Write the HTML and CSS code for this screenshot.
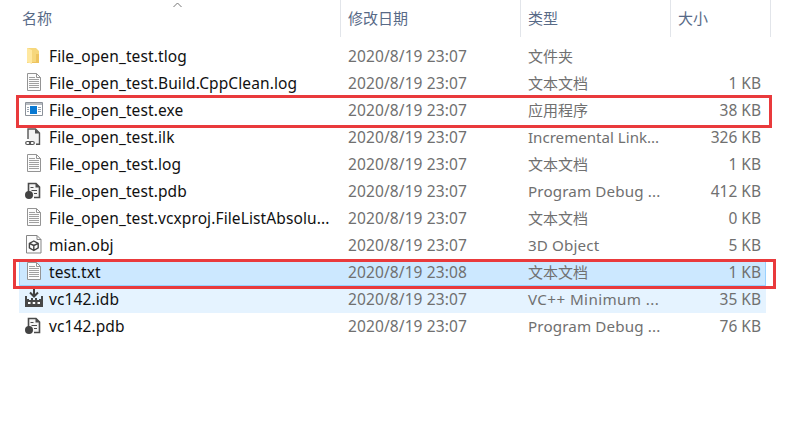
FILE: index.html
```html
<!DOCTYPE html>
<html lang="zh-CN">
<head>
<meta charset="utf-8">
<title>Debug</title>
<link rel="stylesheet" href="styles.css">
</head>
<body>
<svg class="defs" aria-hidden="true">
  <symbol id="folder" viewBox="0 0 20 22"><path d="M3 3h9l3 3v12H3z" fill="#f6d77c"/><path d="M3 3l5 2v14l-5-2z" fill="#ffe8a0"/><path d="M12 9h3v9H8v-1h4z" fill="#eec45f"/></symbol>
  <symbol id="doc" viewBox="0 0 20 22"><path d="M3.500 2.500h9l4 4v13h-13z" fill="#fcfcfc" stroke="#949494"/><path d="M12.500 2.500v4h4" fill="none" stroke="#949494"/><path d="M5 6.500h6M5 8.500h10M5 10.500h10M5 12.500h10M5 14.500h10M5 16.500h10" stroke="#a0a0a0" fill="none"/></symbol>
  <symbol id="exe" viewBox="0 0 20 22"><path d="M1.500 3.500h17v13h-17z" fill="#fff" stroke="#8b9199"/><path d="M2 4h16v2H2z" fill="#b7bcc2"/><path d="M6 7h7v8H6z" fill="#0878d2"/><path d="M3 8.500h2M3 10.500h2M3 12.500h2M14 8.500h3M14 10.500h3M14 12.500h3" stroke="#9aa5b1"/></symbol>
  <symbol id="ilk" viewBox="0 0 20 22"><path d="M4 13V3.500h8l4 4v11h-4" fill="#f3f3f3"/><path d="M4 13V3h7.500l4 4v11.200H12" fill="none" stroke="#555" stroke-width="1.400"/><path d="M11 3v4.500h5z" fill="#555"/><rect x="1.700" y="15.500" width="5" height="3" rx="1.500" fill="#fff" stroke="#555" stroke-width="1.200"/><rect x="5.300" y="15.500" width="5" height="3" rx="1.500" fill="none" stroke="#555" stroke-width="1.200"/></symbol>
  <symbol id="pdb" viewBox="0 0 20 22"><path d="M4.500 12V3.500h7.500l3.500 3.500v10.500H10" fill="#f4f4f4" stroke="#4b4b4b" stroke-width="1.600"/><path d="M11.500 3v4.500h4.500z" fill="#4b4b4b"/><path d="M6.500 7.500h3M7.500 10.500h5.500M10 13.500h3" stroke="#4b4b4b" stroke-width="1.200"/><circle cx="5" cy="15" r="4" fill="#434343"/></symbol>
  <symbol id="obj" viewBox="0 0 20 22"><path d="M2.500 1.500h10.500l4 4v13.500H2.500z" fill="#fcfcfc" stroke="#858585"/><path d="M13 1.500v4h4" fill="none" stroke="#858585"/><path d="M9.800 7l4.400 2.300v4.600l-4.400 2.600-4.400-2.600V9.300zM5.400 9.300l4.400 2.200 4.400-2.200M9.800 11.500v5" fill="none" stroke="#444" stroke-width="1.400" stroke-linejoin="round"/></symbol>
  <symbol id="idb" viewBox="0 0 20 22"><path d="M10 1v7M6 4.500l4 4 4-4" fill="none" stroke="#404040" stroke-width="2"/><path d="M1 8h2v3h2v1h2v-2h2v2h2v-2h2v2h2v-1h2V8h2v11H1z" fill="#484848"/><path d="M4 14h2.500v2H4zM8.700 14h2.500v2H8.700zM13.500 14H16v2h-2.500z" fill="#fff"/></symbol>
</svg>
<main class="list">
  <header class="row head">
    <span class="name">名称<svg class="sort" viewBox="0 0 10 6"><path d="M1 5l4-4 4 4" fill="none" stroke="#777"/></svg></span><span class="date">修改日期</span><span class="type">类型</span><span class="size">大小</span>
  </header>
  <div class="files">
    <div class="row"><svg class="icon"><use href="#folder"/></svg><span class="name">File_open_test.tlog</span><span class="date">2020/8/19 23:07</span><span class="type">文件夹</span><span class="size"></span></div>
    <div class="row"><svg class="icon doc"><use href="#doc"/></svg><span class="name">File_open_test.Build.CppClean.log</span><span class="date">2020/8/19 23:07</span><span class="type">文本文档</span><span class="size">1 KB</span></div>
    <div class="row marked"><svg class="icon"><use href="#exe"/></svg><span class="name">File_open_test.exe</span><span class="date">2020/8/19 23:07</span><span class="type">应用程序</span><span class="size">38 KB</span></div>
    <div class="row"><svg class="icon"><use href="#ilk"/></svg><span class="name">File_open_test.ilk</span><span class="date">2020/8/19 23:07</span><span class="type latin">Incremental Link...</span><span class="size">326 KB</span></div>
    <div class="row"><svg class="icon doc"><use href="#doc"/></svg><span class="name">File_open_test.log</span><span class="date">2020/8/19 23:07</span><span class="type">文本文档</span><span class="size">1 KB</span></div>
    <div class="row"><svg class="icon"><use href="#pdb"/></svg><span class="name">File_open_test.pdb</span><span class="date">2020/8/19 23:07</span><span class="type debug">Program Debug ...</span><span class="size">412 KB</span></div>
    <div class="row"><svg class="icon doc"><use href="#doc"/></svg><span class="name">File_open_test.vcxproj.FileListAbsolu...</span><span class="date">2020/8/19 23:07</span><span class="type">文本文档</span><span class="size">0 KB</span></div>
    <div class="row"><svg class="icon"><use href="#obj"/></svg><span class="name">mian.obj</span><span class="date">2020/8/19 23:07</span><span class="type debug">3D Object</span><span class="size">5 KB</span></div>
    <div class="row selected marked wide"><svg class="icon doc"><use href="#doc"/></svg><span class="name">test.txt</span><span class="date">2020/8/19 23:08</span><span class="type">文本文档</span><span class="size">1 KB</span></div>
    <div class="row hover"><svg class="icon"><use href="#idb"/></svg><span class="name">vc142.idb</span><span class="date">2020/8/19 23:07</span><span class="type minimum">VC++ Minimum ...</span><span class="size">35 KB</span></div>
    <div class="row"><svg class="icon"><use href="#pdb"/></svg><span class="name">vc142.pdb</span><span class="date">2020/8/19 23:07</span><span class="type debug">Program Debug ...</span><span class="size">76 KB</span></div>
  </div>
</main>
</body>
</html>
```
FILE: styles.css
```css
* { box-sizing: border-box; }
body {
  margin: 0;
  background: #fff;
  color: #111;
  font: 15.5px/27px "Noto Sans", "Noto Sans CJK SC", sans-serif;
}
.defs { position: absolute; width: 0; height: 0; }
.list { padding-left: 19px; }
.row {
  display: grid;
  grid-template-columns: 30px 299px 180px 150px 83px;
  width: 747px;
  height: 27px;
  position: relative;
  white-space: nowrap;
}
.icon { width: 20px; height: 22px; margin: 2px 0 0 5px; }
.icon.doc { margin-top: 1px; }
.name, .date { letter-spacing: 0.11px; }
.date, .type, .size { color: #707070; }
.size { text-align: right; }
.type, .head { font-size: 15px; }
.type.latin { font-size: 15.1px; }
.type.debug { font-size: 15.2px; letter-spacing: 0.13px; }
.type.minimum { font-size: 15.2px; letter-spacing: 0.4px; }

.head {
  grid-template-columns: 322px 180px 150px 100px;
  width: 752px;
  height: 35px;
  line-height: 37px;
}
.head span {
  color: #586a87;
  border-right: 1px solid #e2e5ea;
  padding-left: 7px;
  text-align: left;
  letter-spacing: 0;
  position: relative;
}
.head .name { padding-left: 3px; }
.sort { position: absolute; left: 153px; top: 2px; width: 11px; height: 6px; }

.files { padding-top: 8px; }
.selected { background: #cce8ff; box-shadow: inset 0 0 0 1px #99d1ff; }
.hover { background: #e5f3ff; }
.marked { z-index: 1; }
.marked::after {
  content: "";
  position: absolute;
  inset: -2px -6px -4px -3px;
  border: 3px solid #e93a3c;
}
.wide::after { inset: 0 -10px -3px -6px; }
```
